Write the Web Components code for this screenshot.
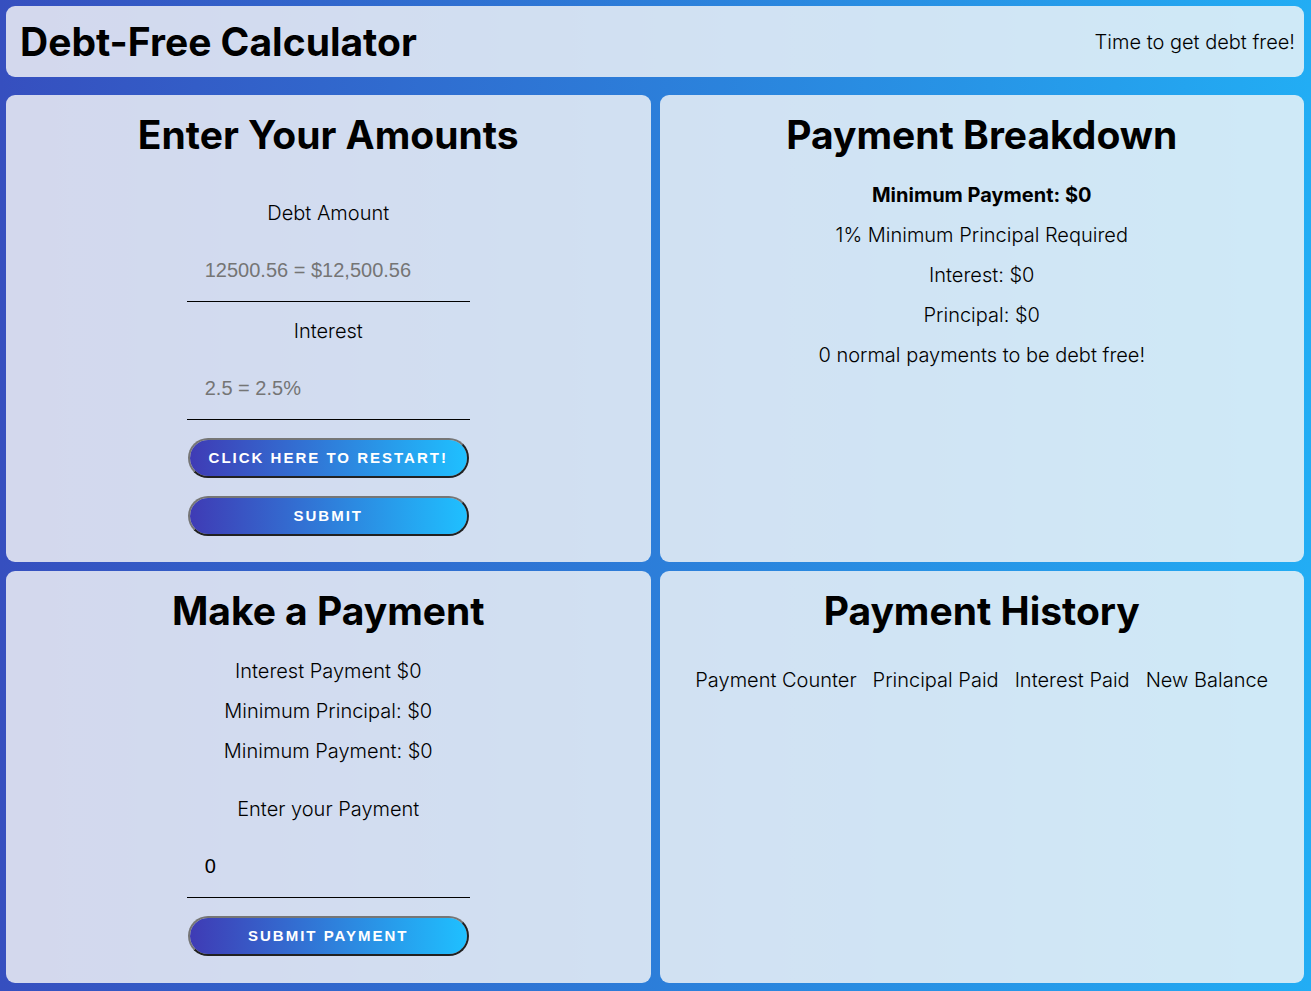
<!DOCTYPE html>
<html lang="en">
<head>
<meta charset="utf-8">
<meta name="viewport" content="width=device-width, initial-scale=1">
<title>Debt-Free Calculator</title>
<style>
  html { min-height: 100%; background: linear-gradient(to right, #364fbf, #22adf4); }
  body {
    margin: 0;
    font: 300 20px/22px Inter, "Open Sans", sans-serif;
    color: #000;
    --title-size: 39px;
    --accent: linear-gradient(to right, #3f3bb5, #1fc0ff);
    --surface: rgba(247, 247, 247, .81);
  }
</style>
</head>
<body>
<debt-app></debt-app>
<script>
class BaseElement extends HTMLElement {
  connectedCallback() {
    if (this.shadowRoot) return;
    this.attachShadow({ mode: "open" }).innerHTML = this.render();
  }
}

customElements.define("app-header", class extends BaseElement {
  render() {
    return `<style>
      :host { display: block; }
      header { display: flex; justify-content: space-between; align-items: center; padding: 14px 9px 13px 14px; background: var(--surface); border-radius: 9px; }
      h1 { margin: 0; font-size: var(--title-size); line-height: 44px; font-weight: 700; }
      p { margin: 0; }
    </style>
    <header><h1><slot></slot></h1><p><slot name="tagline"></slot></p></header>`;
  }
});

customElements.define("app-panel", class extends BaseElement {
  render() {
    return `<style>
      :host { display: block; min-width: 0; }
      section { box-sizing: border-box; height: 100%; padding: 18px 26px 26px; background: var(--surface); border-radius: 9px; text-align: center; }
      h2 { margin: 0 0 27px; font-size: var(--title-size); line-height: 44px; font-weight: 700; }
      .body { display: flex; flex-direction: column; align-items: center; gap: 18px; }
    </style>
    <section><h2>${this.getAttribute("heading")}</h2><div class="body"><slot></slot></div></section>`;
  }
});

customElements.define("number-field", class extends BaseElement {
  render() {
    return `<style>
      :host { display: block; width: 283px; max-width: 100%; padding-top: 18px; }
      :host([compact]) { padding-top: 0; }
      label { display: block; margin-bottom: 18px; text-align: center; }
      input { display: block; box-sizing: border-box; width: 100%; height: 60px; padding: 17px 18px 19px; border: 0; border-bottom: 1px solid #000; background: transparent; color: #000; font: 400 20px/23px "Liberation Sans", Arial, sans-serif; }
      input::placeholder { color: #757575; opacity: 1; }
    </style>
    <label for="field">${this.getAttribute("label")}</label>
    <input id="field" type="text" inputmode="decimal" placeholder="${this.getAttribute("placeholder") || ""}" value="${this.getAttribute("value") || ""}">`;
  }
});

customElements.define("pill-button", class extends BaseElement {
  render() {
    return `<style>
      :host { display: block; width: 281px; max-width: 100%; }
      button { display: block; width: 100%; height: 40px; padding: 0 18px; border: 2px solid; border-color: #767676 #212121 #212121 #767676; border-radius: 20px; background: var(--accent) padding-box; color: #fff; font: 700 15px/18px "Liberation Sans", Arial, sans-serif; letter-spacing: 2px; text-transform: uppercase; white-space: nowrap; }
    </style>
    <button type="button"><slot></slot></button>`;
  }
});

customElements.define("payment-history", class extends BaseElement {
  render() {
    return `<style>
      :host { display: block; padding-top: 9px; }
      table { border-collapse: collapse; }
      th { padding: 0 8px; font-weight: 300; white-space: nowrap; }
    </style>
    <table><thead><tr><th scope="col">Payment Counter</th><th scope="col">Principal Paid</th><th scope="col">Interest Paid</th><th scope="col">New Balance</th></tr></thead><tbody></tbody></table>`;
  }
});

customElements.define("debt-app", class extends BaseElement {
  render() {
    return `<style>
      :host { display: flex; flex-direction: column; gap: 18px; box-sizing: border-box; min-height: 100vh; padding: 6px 7px 8px 6px; }
      main { flex: 1; display: grid; grid-template-columns: 1fr 1fr; grid-template-rows: auto 1fr; gap: 9px; }
      p { margin: 0; }
      strong { font-weight: 700; }
    </style>
    <app-header>Debt-Free Calculator<span slot="tagline">Time to get debt free!</span></app-header>
    <main>
      <app-panel heading="Enter Your Amounts">
        <number-field label="Debt Amount" placeholder="12500.56 = $12,500.56"></number-field>
        <number-field compact label="Interest" placeholder="2.5 = 2.5%"></number-field>
        <pill-button>Click here to restart!</pill-button>
        <pill-button>Submit</pill-button>
      </app-panel>
      <app-panel heading="Payment Breakdown">
        <p><strong>Minimum Payment: $0</strong></p>
        <p>1% Minimum Principal Required</p>
        <p>Interest: $0</p>
        <p>Principal: $0</p>
        <p>0 normal payments to be debt free!</p>
      </app-panel>
      <app-panel heading="Make a Payment">
        <p>Interest Payment $0</p>
        <p>Minimum Principal: $0</p>
        <p>Minimum Payment: $0</p>
        <number-field label="Enter your Payment" value="0"></number-field>
        <pill-button>Submit Payment</pill-button>
      </app-panel>
      <app-panel heading="Payment History">
        <payment-history></payment-history>
      </app-panel>
    </main>`;
  }
});
</script>
</body>
</html>
